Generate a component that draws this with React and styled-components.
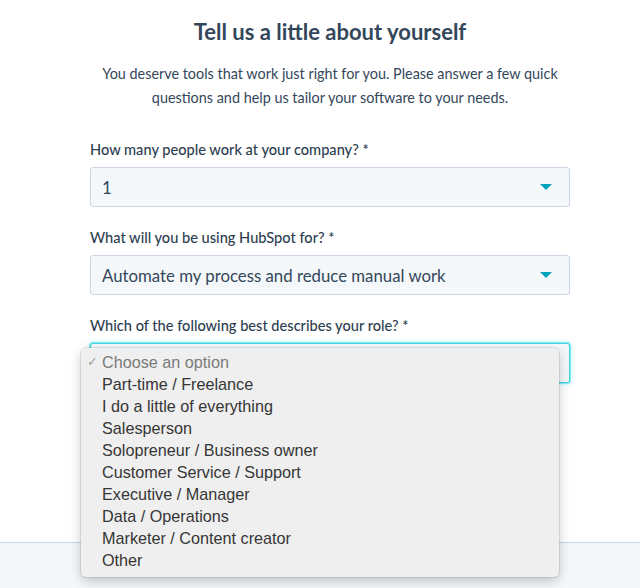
import React from 'react'
import styled, { createGlobalStyle } from 'styled-components'

const GlobalStyle = createGlobalStyle`
  html, body {
    margin: 0;
    padding: 0;
    background: #fff;
  }
  body {
    font-family: 'Lato', 'Open Sans', sans-serif;
    color: #33475b;
  }
`

const Page = styled.div`
  width: 640px;
  height: 588px;
  display: flex;
  flex-direction: column;
  overflow: hidden;
`

const Main = styled.main`
  height: 542px;
  display: flex;
  flex-direction: column;
  align-items: center;
  padding: 17px 0 0 20px;
  box-sizing: border-box;
`

const Title = styled.h1`
  margin: 0;
  font-size: 22px;
  line-height: 30px;
  font-weight: 700;
  color: #33475b;
  text-align: center;
`

const Intro = styled.p`
  margin: 15px 0 0;
  width: 500px;
  font-size: 14.4px;
  line-height: 24px;
  text-align: center;
  color: #33475b;
`

const Form = styled.form`
  width: 480px;
  margin-top: 31px;
  display: flex;
  flex-direction: column;
  gap: 22px;
`

const Field = styled.div`
  display: flex;
  flex-direction: column;
  gap: 8px;
  position: relative;
`

const Label = styled.label`
  font-size: 14.6px;
  line-height: 18px;
  font-weight: 500;
  color: #2d3e50;
`

const Select = styled.div`
  height: 40px;
  box-sizing: border-box;
  display: flex;
  align-items: center;
  justify-content: space-between;
  padding: 0 17px 0 11px;
  background: #f5f8fa;
  border: 1px solid ${p => (p.$focused ? '#3fd3e6' : '#cbd6e2')};
  box-shadow: ${p =>
    p.$focused ? '0 0 0 1px rgba(0, 208, 228, 0.35), 0 0 4px 1px rgba(0, 208, 228, 0.3)' : 'none'};
  border-radius: 3px;
  font-size: 16.8px;
  color: #33475b;
`

const Caret = styled.span`
  width: 0;
  height: 0;
  border-left: 6px solid transparent;
  border-right: 6px solid transparent;
  border-top: 6px solid #00a4bd;
`

const Menu = styled.ul`
  position: absolute;
  left: -9px;
  top: 31px;
  width: 478px;
  margin: 0;
  padding: 3px 0 6px;
  list-style: none;
  background: #efefef;
  border-radius: 5px;
  box-shadow: 0 0 0 1px rgba(0, 0, 0, 0.08), 0 4px 12px rgba(0, 0, 0, 0.22);
  font-family: 'Liberation Sans', Arial, sans-serif;
  font-size: 16.2px;
  z-index: 5;
`

const Option = styled.li`
  position: relative;
  height: 22px;
  line-height: 22px;
  padding-left: 21px;
  color: ${p => (p.$placeholder ? '#7a7a7a' : '#363636')};
`

const Check = styled.span`
  position: absolute;
  left: 6px;
  top: 0;
  font-size: 13px;
  color: #a0a0a0;
`

const Footer = styled.footer`
  flex: 1;
  background: #f5f8fa;
  border-top: 1px solid #cbd6e2;
`

const roles = [
  'Part-time / Freelance',
  'I do a little of everything',
  'Salesperson',
  'Solopreneur / Business owner',
  'Customer Service / Support',
  'Executive / Manager',
  'Data / Operations',
  'Marketer / Content creator',
  'Other',
]

export default function App() {
  return (
    <Page>
      <GlobalStyle />
      <Main>
        <Title>Tell us a little about yourself</Title>
        <Intro>
          You deserve tools that work just right for you. Please answer a few quick
          questions and help us tailor your software to your needs.
        </Intro>
        <Form>
          <Field>
            <Label>How many people work at your company? *</Label>
            <Select>
              <span>1</span>
              <Caret />
            </Select>
          </Field>
          <Field>
            <Label>What will you be using HubSpot for? *</Label>
            <Select>
              <span>Automate my process and reduce manual work</span>
              <Caret />
            </Select>
          </Field>
          <Field>
            <Label>Which of the following best describes your role? *</Label>
            <Select $focused>
              <span />
              <Caret />
            </Select>
            <Menu>
              <Option $placeholder>
                <Check>✓</Check>
                Choose an option
              </Option>
              {roles.map(r => (
                <Option key={r}>{r}</Option>
              ))}
            </Menu>
          </Field>
        </Form>
      </Main>
      <Footer />
    </Page>
  )
}
